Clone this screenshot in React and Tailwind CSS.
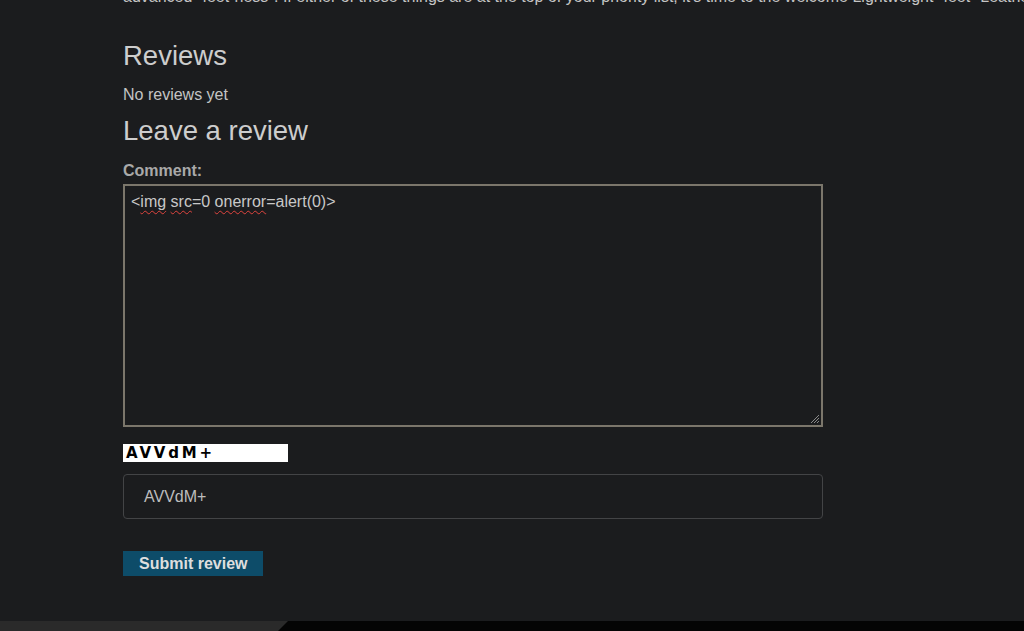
import React from 'react';

const font = { fontFamily: '"Liberation Sans", Arial, sans-serif' };

function Squiggle({ children }) {
  return (
    <span className="underline decoration-wavy decoration-[#e0443e] decoration-1 underline-offset-[3px]">
      {children}
    </span>
  );
}

export default function App() {
  return (
    <div className="w-[1024px] h-[631px] overflow-hidden bg-[#1b1c1e] flex flex-col" style={font}>
      <div className="flex-1 overflow-hidden">
        <div className="ml-[123px] w-[700px]">
          {/* tail of the product description above */}
          <p className="-mt-[15px] text-[16px] leading-[24px] text-[#c4c4c4] whitespace-nowrap">
            advanced "feet-ness". If either of these things are at the top of your priority list, it's time to the welcome Lightweight "feet" Leather shoes.
          </p>

          <h2 className="mt-[31px] text-[27.5px] leading-[31px] text-[#cdcdcd]">Reviews</h2>
          <p className="mt-[12px] text-[16px] leading-[24px] text-[#c4c4c4]">No reviews yet</p>

          <h2 className="mt-[8px] text-[27.5px] leading-[31px] text-[#cdcdcd]">Leave a review</h2>

          <form className="flex flex-col items-start" onSubmit={(e) => e.preventDefault()}>
            <label className="mt-[13px] text-[16px] leading-[24px] font-bold text-[#a9a9a9]">Comment:</label>

            <div className="relative mt-[1px] w-[700px] h-[243px] border-2 border-[#7b766b] bg-[#1b1c1e] px-[6px] pt-[4px]">
              <span className="text-[16px] leading-[19px] text-[#c8c8c8]">
                &lt;<Squiggle>img</Squiggle> <Squiggle>src</Squiggle>=0 <Squiggle>onerror</Squiggle>=alert(0)&gt;
              </span>
              <svg className="absolute right-[1px] bottom-[1px]" width="10" height="10" viewBox="0 0 10 10">
                <path d="M9 1L1 9M9 4L4 9M9 7L7 9" stroke="#8a8a8a" strokeWidth="1" />
              </svg>
            </div>

            <div
              className="mt-[17px] w-[165px] h-[18px] bg-white flex items-center pl-[3px] text-[15px] font-bold tracking-[2.8px] text-black"
              style={{ fontFamily: '"DejaVu Sans", Verdana, sans-serif' }}
            >
              AVVdM+
            </div>

            <div className="mt-[12px] w-[700px] h-[45px] border border-[#434446] rounded-[4px] flex items-center pl-[20px] text-[16px] text-[#bdbdbd]">
              AVVdM+
            </div>

            <button
              type="submit"
              className="mt-[32px] h-[25px] px-[16px] bg-[#0d4c69] text-[16px] font-bold text-[#dedede] leading-[25px]"
            >
              Submit review
            </button>
          </form>
        </div>
      </div>

      {/* footer strip */}
      <div className="h-[10px] flex bg-[#040404]">
        <div className="w-[288px] h-full bg-[#2a2a2a] [clip-path:polygon(0_0,100%_0,calc(100%-10px)_100%,0_100%)]" />
      </div>
    </div>
  );
}
